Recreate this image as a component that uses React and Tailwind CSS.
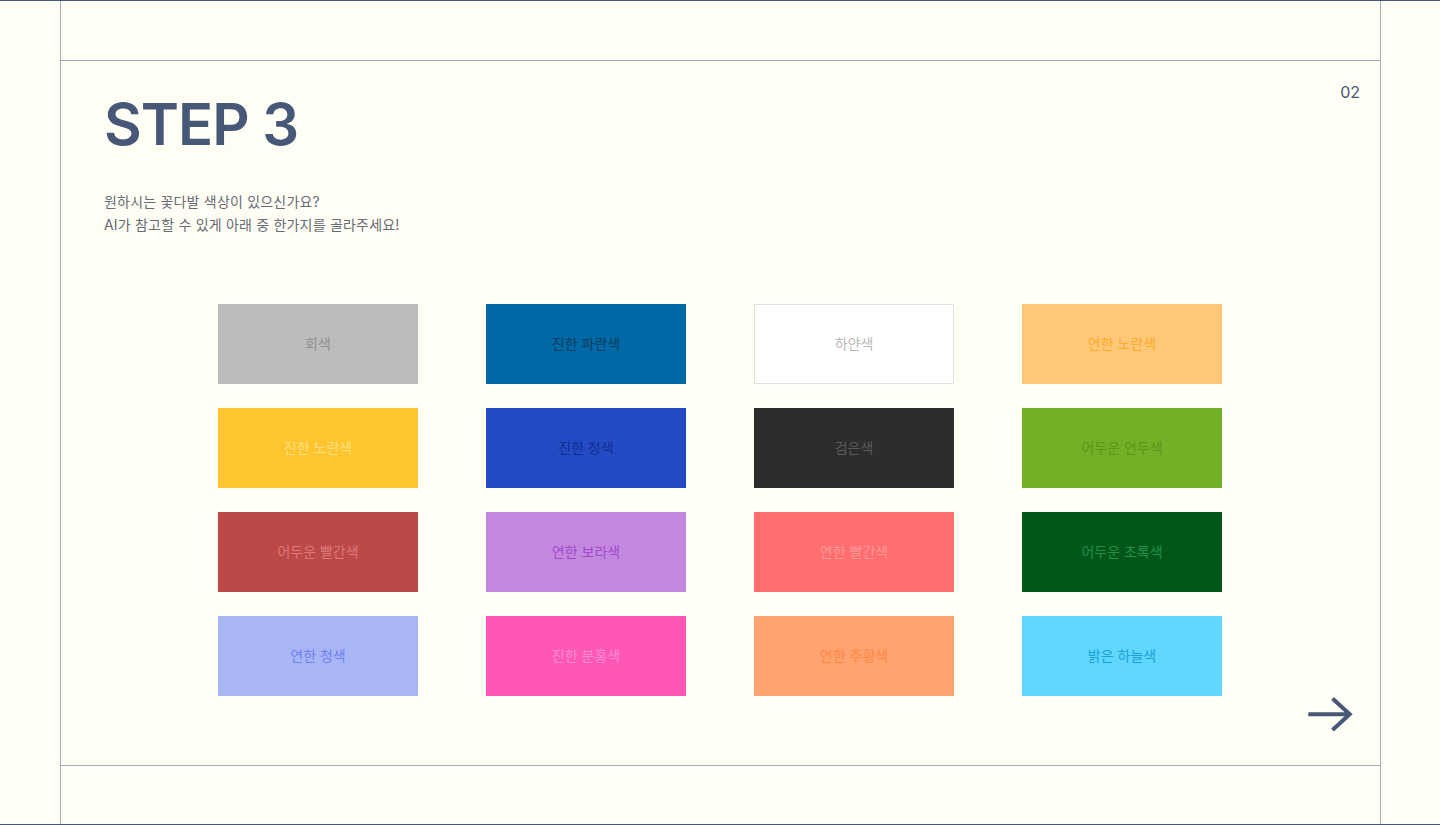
import React from "react";

const colors = [
  { name: "회색", cls: "bg-[#bcbcbc] text-[#8f8f8f]" },
  { name: "진한 파란색", cls: "bg-[#0069a6] text-[#0b3d5e]" },
  { name: "하얀색", cls: "bg-white text-[#b8b8b8] border border-[#e2e2e2]" },
  { name: "연한 노란색", cls: "bg-[#ffc879] text-[#ffa826]" },
  { name: "진한 노란색", cls: "bg-[#ffc531] text-[#ffe07c]" },
  { name: "진한 청색", cls: "bg-[#244ac4] text-[#122f8f]" },
  { name: "검은색", cls: "bg-[#2d2d2d] text-[#5a5a5a]" },
  { name: "어두운 연두색", cls: "bg-[#73b025] text-[#5a961a]" },
  { name: "어두운 빨간색", cls: "bg-[#bc4848] text-[#dd7a7a]" },
  { name: "연한 보라색", cls: "bg-[#c387dd] text-[#a04bd0]" },
  { name: "연한 빨간색", cls: "bg-[#ff6f6f] text-[#ff9797]" },
  { name: "어두운 초록색", cls: "bg-[#005719] text-[#24904a]" },
  { name: "연한 청색", cls: "bg-[#aab5f3] text-[#6d80f5]" },
  { name: "진한 분홍색", cls: "bg-[#ff57b8] text-[#ff8ccf]" },
  { name: "연한 주황색", cls: "bg-[#ffa36f] text-[#ff8647]" },
  { name: "밝은 하늘색", cls: "bg-[#61d7ff] text-[#1a9fd6]" }
];

function NextArrow() {
  return (
    <svg width="48" height="40" viewBox="0 0 48 40" fill="none">
      <path
        d="M1.3 18.2H42M25.5 2.5L42.7 18.2L25.5 34"
        stroke="#475778"
        strokeWidth="4"
      />
    </svg>
  );
}

export default function App() {
  return (
    <div className="w-[1440px] h-[825px] bg-[#fffef5] border-y border-[#475778] flex font-[Inter,'Noto_Sans_CJK_KR',sans-serif]">
      <div className="w-[60px] shrink-0"></div>

      <div className="w-[1321px] shrink-0 border-x border-[#a3aab9] flex flex-col">
        <div className="h-[60px] border-b border-[#a3aab9]"></div>

        <main className="flex-1 flex flex-col">
          <div className="flex justify-between items-start pl-[43px] pr-[20px] pt-[23px]">
            <div className="mt-[10px]">
              <h1 className="text-[58px] leading-[60px] font-semibold tracking-[-1px] text-[#475778]">
                STEP 3
              </h1>
              <p className="mt-[36px] text-[14px] leading-[23px] tracking-[0.2px] text-[#676b74]">
                원하시는 꽃다발 색상이 있으신가요?
                <br />
                AI가 참고할 수 있게 아래 중 한가지를 골라주세요!
              </p>
            </div>
            <span className="text-[16px] leading-none text-[#475778]">02</span>
          </div>

          <div className="ml-[157px] mt-[68px] grid grid-cols-[repeat(4,200px)] gap-x-[68px] gap-y-[24px]">
            {colors.map((c) => (
              <div
                key={c.name}
                className={`h-[80px] pb-[1px] flex items-center justify-center text-[14px] ${c.cls}`}
              >
                {c.name}
              </div>
            ))}
          </div>

          <div className="flex justify-end pr-[25px]">
            <NextArrow />
          </div>
        </main>

        <div className="h-[59px] border-t border-[#a3aab9]"></div>
      </div>

      <div className="flex-1"></div>
    </div>
  );
}
